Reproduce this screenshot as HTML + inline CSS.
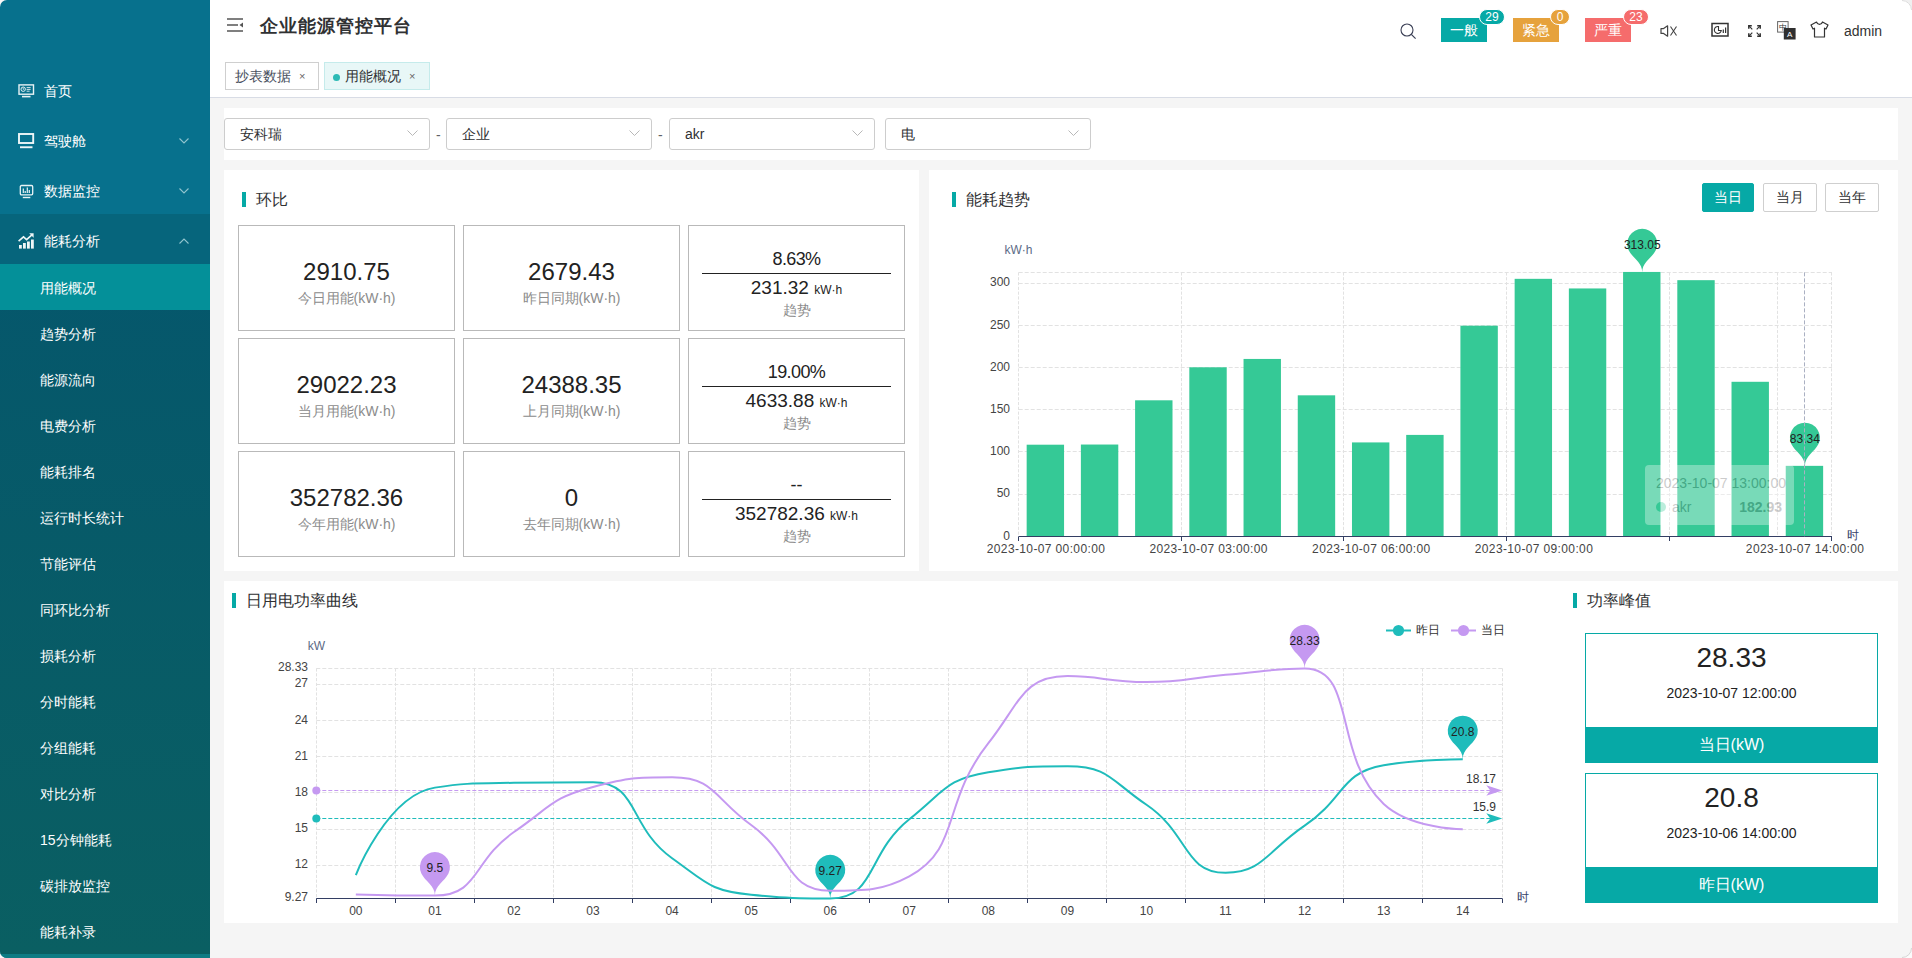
<!DOCTYPE html>
<html lang="zh">
<head>
<meta charset="utf-8">
<title>企业能源管控平台</title>
<style>
*{box-sizing:border-box;margin:0;padding:0}
html,body{width:1912px;height:958px;overflow:hidden}
body{position:relative;background:#f5f5f5;font-family:"Liberation Sans",sans-serif;color:#303133}
.a{position:absolute}
.sb{left:0;top:0;width:210px;height:958px;background:#07718d;border-top-left-radius:7px;border-bottom-left-radius:7px;overflow:hidden}
.mi{position:absolute;left:0;width:210px;height:50px;color:#fff;font-size:14px;line-height:50px}
.mi span{position:absolute;left:44px;top:2px}
.mi svg.ic{position:absolute;left:18px;top:19px}
.mi svg.ch{position:absolute;left:179px;top:24px}
.sub{position:absolute;left:0;top:264px;width:210px;height:690px;background:linear-gradient(#05576c,#0a5f62)}
.si{position:absolute;left:0;width:210px;height:46px;line-height:48px;color:#fff;font-size:14px;padding-left:40px}
.si.on{background:#049099}
.hd{left:210px;top:0;width:1702px;height:98px;background:#fff;border-bottom:1px solid #d8dce5}
.title{position:absolute;left:50px;top:13px;font-size:18px;font-weight:bold;color:#303133;line-height:26px;letter-spacing:1px}
.tag{position:absolute;top:62px;height:28px;border:1px solid #cfcfcf;background:#fff;font-size:14px;line-height:26px;color:#495060;padding-left:9px}
.tag.on{background:#e8f7f7;border-color:#c5ebeb;color:#303133}
.tag .x{position:absolute;font-size:11px;color:#666;top:0}
.badge{position:absolute;top:18px;height:24px;width:46px;color:#fff;font-size:14px;line-height:24px;text-align:center}
.bn{position:absolute;top:9px;height:16px;border-radius:8px;border:1px solid #fff;color:#fff;font-size:12px;line-height:14px;text-align:center}
.panel{background:#fff}
.sel{position:absolute;top:10px;width:206px;height:32px;border:1px solid #cdcdcd;border-radius:3px;font-size:14px;line-height:30px;padding-left:15px;color:#303133}
.sel svg{position:absolute;right:10px;top:11px}
.dash{position:absolute;top:11px;line-height:32px;font-size:14px;color:#606266}
.ptitle{position:absolute;font-size:16px;color:#303133;line-height:20px}
.bar4{position:absolute;width:4px;height:15px;background:#06a9a6}
.card{position:absolute;width:217px;height:106px;border:1px solid #b9b9b9;text-align:center}
.card .v{position:absolute;left:0;right:0;font-size:24px;color:#222;line-height:28px}
.card .l{position:absolute;left:0;right:0;font-size:14px;color:#8c8c8c;line-height:18px}
.btn{position:absolute;top:13px;height:29px;width:53px;border:1px solid #cfcfcf;border-radius:2px;font-size:14px;line-height:27px;text-align:center;color:#303133;background:#fff}
.btn.on{background:#06a9a6;border-color:#06a9a6;color:#fff}
svg text{font-family:"Liberation Sans",sans-serif}
.al{font-size:12px;fill:#444}
.an{font-size:12px;fill:#5b6a86}
.pl{font-size:12px;fill:#222}
.ml{font-size:12px;fill:#333}
.lg{font-size:12px;fill:#333}
.tt{font-size:14px;fill:#c9c9c9}
.pk{position:absolute;left:1585px;width:293px;height:130px;border:1px solid #06a9a6}
.pk .v{position:absolute;left:0;right:0;top:6px;text-align:center;font-size:28px;line-height:36px;color:#222}
.pk .d{position:absolute;left:0;right:0;top:50px;text-align:center;font-size:14px;line-height:18px;color:#222}
.pk .f{position:absolute;left:-1px;right:-1px;bottom:-1px;height:36px;background:#06a9a6;color:#fff;text-align:center;font-size:16px;line-height:36px}
</style>
</head>
<body>

<div class="a" style="left:0;top:0;width:20px;height:958px;background:#fbf8f8"></div>
<!-- SIDEBAR -->
<div class="a sb">
  <div class="mi" style="top:64px">
    <svg class="ic" width="17" height="16" viewBox="0 0 17 16"><rect x="1" y="1.9" width="14.5" height="9.3" fill="none" stroke="#e8f3f5" stroke-width="1.4"/><circle cx="5.2" cy="6.2" r="2.2" fill="none" stroke="#e8f3f5" stroke-width="1"/><path d="M5.2 4.8v1.5h1" stroke="#e8f3f5" stroke-width="0.8" fill="none"/><path d="M8.6 4.6h4M8.6 6.4h4M8.6 8.2h3" stroke="#e8f3f5" stroke-width="0.9"/><rect x="4" y="12.8" width="8.5" height="1.6" fill="#e8f3f5"/></svg>
    <span>首页</span>
  </div>
  <div class="mi" style="top:114px">
    <svg class="ic" width="17" height="16" viewBox="0 0 17 16"><rect x="1" y="1" width="14.2" height="9" fill="none" stroke="#eef6f7" stroke-width="1.9"/><rect x="2" y="13.3" width="12.5" height="1.9" fill="#eef6f7"/></svg>
    <span>驾驶舱</span>
    <svg class="ch" width="10" height="6" viewBox="0 0 10 6"><path d="M0.5 0.5L5 5L9.5 0.5" fill="none" stroke="#8fc3cd" stroke-width="1.1"/></svg>
  </div>
  <div class="mi" style="top:164px">
    <svg class="ic" width="17" height="16" viewBox="0 0 17 16"><rect x="2.3" y="2.5" width="12.4" height="9.3" rx="1.2" fill="none" stroke="#e8f3f5" stroke-width="1.3"/><path d="M5.3 10V5.5M7.2 10V8M9.3 10V4.5M11.3 10V7" stroke="#e8f3f5" stroke-width="1.2"/><rect x="4.8" y="13.8" width="7.5" height="1.4" fill="#e8f3f5"/></svg>
    <span>数据监控</span>
    <svg class="ch" width="10" height="6" viewBox="0 0 10 6"><path d="M0.5 0.5L5 5L9.5 0.5" fill="none" stroke="#8fc3cd" stroke-width="1.1"/></svg>
  </div>
  <div class="mi" style="top:214px;background:#06657c">
    <svg class="ic" width="17" height="17" viewBox="0 0 17 17"><path d="M0.6 8.2L5.5 3.8L8.6 6.6L14.2 1.6" fill="none" stroke="#eef6f7" stroke-width="1.6"/><path d="M11.2 0.3h4.4v4.4z" fill="#eef6f7"/><rect x="1" y="12" width="2.8" height="3.6" fill="#eef6f7"/><rect x="5" y="10" width="2.8" height="5.6" fill="#eef6f7"/><rect x="9" y="8.5" width="2.8" height="7.1" fill="#eef6f7"/><rect x="13" y="6.5" width="2.8" height="9.1" fill="#eef6f7"/></svg>
    <span>能耗分析</span>
    <svg class="ch" width="10" height="6" viewBox="0 0 10 6" style="top:24px"><path d="M0.5 5.5L5 1L9.5 5.5" fill="none" stroke="#8fc3cd" stroke-width="1.1"/></svg>
  </div>
  <div class="sub">
    <div class="si on" style="top:0">用能概况</div>
    <div class="si" style="top:46px">趋势分析</div>
    <div class="si" style="top:92px">能源流向</div>
    <div class="si" style="top:138px">电费分析</div>
    <div class="si" style="top:184px">能耗排名</div>
    <div class="si" style="top:230px">运行时长统计</div>
    <div class="si" style="top:276px">节能评估</div>
    <div class="si" style="top:322px">同环比分析</div>
    <div class="si" style="top:368px">损耗分析</div>
    <div class="si" style="top:414px">分时能耗</div>
    <div class="si" style="top:460px">分组能耗</div>
    <div class="si" style="top:506px">对比分析</div>
    <div class="si" style="top:552px">15分钟能耗</div>
    <div class="si" style="top:598px">碳排放监控</div>
    <div class="si" style="top:644px">能耗补录</div>
  </div>
  <div class="a" style="left:0;top:954px;width:210px;height:4px;background:#0e7c84"></div>
</div>

<!-- HEADER -->
<div class="a hd">
  <svg class="a" style="left:17px;top:18px" width="17" height="15" viewBox="0 0 17 15"><path d="M0 1h16M0 7h11M0 13h16" stroke="#555" stroke-width="1.6"/><path d="M16 4.5L12.5 7L16 9.5z" fill="#555"/></svg>
  <div class="title">企业能源管控平台</div>
  <div class="tag" style="left:15px;width:94px">抄表数据<span class="x" style="left:73px">×</span></div>
  <div class="tag on" style="left:114px;width:106px"><span style="position:absolute;left:8px;top:11px;width:7px;height:7px;border-radius:50%;background:#2cbab5"></span><span style="position:absolute;left:20px">用能概况</span><span class="x" style="left:84px">×</span></div>

  <svg class="a" style="left:1190px;top:23px" width="17" height="17" viewBox="0 0 17 17"><circle cx="7" cy="7" r="6" fill="none" stroke="#3a3f55" stroke-width="1.1"/><path d="M11.3 11.3L15.6 15.6" stroke="#3a3f55" stroke-width="1.2"/></svg>

  <div class="badge" style="left:1231px;background:#06a9a6">一般</div>
  <div class="bn" style="left:1269px;width:26px;background:#06a9a6">29</div>
  <div class="badge" style="left:1303px;background:#e6a23c">紧急</div>
  <div class="bn" style="left:1340px;width:20px;background:#e6a23c">0</div>
  <div class="badge" style="left:1375px;background:#f56c6c">严重</div>
  <div class="bn" style="left:1413px;width:26px;background:#f56c6c">23</div>

  <svg class="a" style="left:1450px;top:25px" width="18" height="12" viewBox="0 0 18 12"><path d="M1 3.6h2.6L7.6 0.8v10.4L3.6 8.4H1z" fill="none" stroke="#444" stroke-width="1.2" stroke-linejoin="round"/><path d="M10.5 1.5L16.5 10.5M16.5 1.5L10.5 10.5" stroke="#444" stroke-width="1.1"/></svg>
  <svg class="a" style="left:1501px;top:22px" width="19" height="16" viewBox="0 0 19 16"><rect x="1" y="1.5" width="16" height="12.5" fill="none" stroke="#333" stroke-width="1.5"/><path d="M7.5 4.5A3.5 3.5 0 1 0 10.3 8.5H7.5z" fill="none" stroke="#333" stroke-width="1.1"/><path d="M12.3 11V7.5M14.6 11V5.5" stroke="#333" stroke-width="1.2"/></svg>
  <svg class="a" style="left:1538px;top:25px" width="13" height="12" viewBox="0 0 13 12"><path d="M0.8 3.8V0.8h3M12.2 3.8V0.8h-3M0.8 8.2v3h3M12.2 8.2v3h-3" fill="none" stroke="#333" stroke-width="1.5"/><path d="M1.2 1.2L4.3 4.3M11.8 1.2L8.7 4.3M1.2 10.8L4.3 7.7M11.8 10.8L8.7 7.7" stroke="#333" stroke-width="1.2"/></svg>
  <svg class="a" style="left:1567px;top:21px" width="20" height="19" viewBox="0 0 20 19"><rect x="0.6" y="0.6" width="10.5" height="10.5" fill="#fff" stroke="#666" stroke-width="1"/><text x="5.9" y="8.6" font-size="7.5" text-anchor="middle" fill="#333">中</text><rect x="6.8" y="7" width="11.8" height="11.5" fill="#2f2f2f"/><text x="12.7" y="16.3" font-size="8" text-anchor="middle" fill="#fff">A</text></svg>
  <svg class="a" style="left:1600px;top:21px" width="19" height="17" viewBox="0 0 19 17"><path d="M6.5 1L1 4L3 8L4.5 7.2V16H14.5V7.2L16 8L18 4L12.5 1C12 2.5 11 3.3 9.5 3.3S7 2.5 6.5 1z" fill="none" stroke="#333" stroke-width="1.2" stroke-linejoin="round"/></svg>
  <div class="a" style="left:1634px;top:22px;font-size:14px;line-height:18px;color:#333">admin</div>
</div>

<!-- FILTER PANEL -->
<div class="a panel" style="left:224px;top:108px;width:1674px;height:52px">
  <div class="sel" style="left:0">安科瑞<svg width="12" height="7" viewBox="0 0 12 7"><path d="M0.5 0.5L5.5 5.5L10.5 0.5" fill="none" stroke="#b8b8b8" stroke-width="1"/></svg></div>
  <div class="dash" style="left:212px">-</div>
  <div class="sel" style="left:222px">企业<svg width="12" height="7" viewBox="0 0 12 7"><path d="M0.5 0.5L5.5 5.5L10.5 0.5" fill="none" stroke="#b8b8b8" stroke-width="1"/></svg></div>
  <div class="dash" style="left:434px">-</div>
  <div class="sel" style="left:445px">akr<svg width="12" height="7" viewBox="0 0 12 7"><path d="M0.5 0.5L5.5 5.5L10.5 0.5" fill="none" stroke="#b8b8b8" stroke-width="1"/></svg></div>
  <div class="sel" style="left:661px">电<svg width="12" height="7" viewBox="0 0 12 7"><path d="M0.5 0.5L5.5 5.5L10.5 0.5" fill="none" stroke="#b8b8b8" stroke-width="1"/></svg></div>
</div>

<!-- PANEL 环比 -->
<div class="a panel" style="left:224px;top:170px;width:695px;height:401px">
  <div class="bar4" style="left:18px;top:22px"></div>
  <div class="ptitle" style="left:32px;top:20px">环比</div>

  <div class="card" style="left:14px;top:55px"><div class="v" style="top:32px">2910.75</div><div class="l" style="top:63px">今日用能(kW·h)</div></div>
  <div class="card" style="left:239px;top:55px"><div class="v" style="top:32px">2679.43</div><div class="l" style="top:63px">昨日同期(kW·h)</div></div>
  <div class="card" style="left:464px;top:55px">
    <div class="v" style="top:22px;font-size:18px;line-height:22px;letter-spacing:-0.6px">8.63%</div>
    <div class="a" style="left:13px;right:13px;top:47px;height:1px;background:#222"></div>
    <div class="v" style="top:50px;font-size:19px;line-height:24px">231.32 <span style="font-size:12px">kW·h</span></div>
    <div class="l" style="top:75px">趋势</div>
  </div>

  <div class="card" style="left:14px;top:168px"><div class="v" style="top:32px">29022.23</div><div class="l" style="top:63px">当月用能(kW·h)</div></div>
  <div class="card" style="left:239px;top:168px"><div class="v" style="top:32px">24388.35</div><div class="l" style="top:63px">上月同期(kW·h)</div></div>
  <div class="card" style="left:464px;top:168px">
    <div class="v" style="top:22px;font-size:18px;line-height:22px;letter-spacing:-0.6px">19.00%</div>
    <div class="a" style="left:13px;right:13px;top:47px;height:1px;background:#222"></div>
    <div class="v" style="top:50px;font-size:19px;line-height:24px">4633.88 <span style="font-size:12px">kW·h</span></div>
    <div class="l" style="top:75px">趋势</div>
  </div>

  <div class="card" style="left:14px;top:281px"><div class="v" style="top:32px">352782.36</div><div class="l" style="top:63px">今年用能(kW·h)</div></div>
  <div class="card" style="left:239px;top:281px"><div class="v" style="top:32px">0</div><div class="l" style="top:63px">去年同期(kW·h)</div></div>
  <div class="card" style="left:464px;top:281px">
    <div class="v" style="top:22px;font-size:18px;line-height:22px">--</div>
    <div class="a" style="left:13px;right:13px;top:47px;height:1px;background:#222"></div>
    <div class="v" style="top:50px;font-size:19px;line-height:24px">352782.36 <span style="font-size:12px">kW·h</span></div>
    <div class="l" style="top:75px">趋势</div>
  </div>
</div>

<!-- PANEL 能耗趋势 -->
<div class="a panel" style="left:929px;top:170px;width:969px;height:401px">
  <div class="bar4" style="left:23px;top:22px"></div>
  <div class="ptitle" style="left:37px;top:20px">能耗趋势</div>
  <div class="btn on" style="left:773px;width:52px">当日</div>
  <div class="btn" style="left:834px;width:54px">当月</div>
  <div class="btn" style="left:896px;width:54px">当年</div>
</div>

<!-- PANEL bottom -->
<div class="a panel" style="left:224px;top:581px;width:1674px;height:342px">
  <div class="bar4" style="left:8px;top:12px"></div>
  <div class="ptitle" style="left:22px;top:10px">日用电功率曲线</div>
  <div class="bar4" style="left:1349px;top:12px"></div>
  <div class="ptitle" style="left:1363px;top:10px">功率峰值</div>
</div>
<div class="pk" style="top:633px"><div class="v">28.33</div><div class="d">2023-10-07 12:00:00</div><div class="f">当日(kW)</div></div>
<div class="pk" style="top:773px"><div class="v">20.8</div><div class="d">2023-10-06 14:00:00</div><div class="f">昨日(kW)</div></div>

<svg class="a" style="left:0;top:0" width="1912" height="958" viewBox="0 0 1912 958">
<line x1="1018.7" y1="494.5" x2="1832" y2="494.5" stroke="#e2e2e2" stroke-dasharray="4 2"/>
<line x1="1018.7" y1="451.5" x2="1832" y2="451.5" stroke="#e2e2e2" stroke-dasharray="4 2"/>
<line x1="1018.7" y1="409.5" x2="1832" y2="409.5" stroke="#e2e2e2" stroke-dasharray="4 2"/>
<line x1="1018.7" y1="367.5" x2="1832" y2="367.5" stroke="#e2e2e2" stroke-dasharray="4 2"/>
<line x1="1018.7" y1="325.5" x2="1832" y2="325.5" stroke="#e2e2e2" stroke-dasharray="4 2"/>
<line x1="1018.7" y1="283.5" x2="1832" y2="283.5" stroke="#e2e2e2" stroke-dasharray="4 2"/>
<line x1="1018.7" y1="272.5" x2="1832" y2="272.5" stroke="#e2e2e2" stroke-dasharray="4 2"/>
<line x1="1018.5" y1="272.35" x2="1018.5" y2="536.6" stroke="#e2e2e2" stroke-dasharray="3.2 1.6"/>
<line x1="1181.5" y1="272.35" x2="1181.5" y2="536.6" stroke="#e2e2e2" stroke-dasharray="3.2 1.6"/>
<line x1="1343.5" y1="272.35" x2="1343.5" y2="536.6" stroke="#e2e2e2" stroke-dasharray="3.2 1.6"/>
<line x1="1506.5" y1="272.35" x2="1506.5" y2="536.6" stroke="#e2e2e2" stroke-dasharray="3.2 1.6"/>
<line x1="1669.5" y1="272.35" x2="1669.5" y2="536.6" stroke="#e2e2e2" stroke-dasharray="3.2 1.6"/>
<line x1="1777.5" y1="272.35" x2="1777.5" y2="536.6" stroke="#e2e2e2" stroke-dasharray="3.2 1.6"/>
<line x1="1831.5" y1="272.35" x2="1831.5" y2="536.6" stroke="#e2e2e2" stroke-dasharray="3.2 1.6"/>
<rect x="1026.66" y="444.7" width="37.4" height="91.9" fill="#35c996"/>
<rect x="1080.88" y="444.53" width="37.4" height="92.07" fill="#35c996"/>
<rect x="1135.1" y="400.3" width="37.4" height="136.3" fill="#35c996"/>
<rect x="1189.32" y="367.29" width="37.4" height="169.31" fill="#35c996"/>
<rect x="1243.54" y="358.94" width="37.4" height="177.66" fill="#35c996"/>
<rect x="1297.76" y="395.32" width="37.4" height="141.28" fill="#35c996"/>
<rect x="1351.98" y="442.42" width="37.4" height="94.18" fill="#35c996"/>
<rect x="1406.2" y="434.91" width="37.4" height="101.69" fill="#35c996"/>
<rect x="1460.42" y="325.68" width="37.4" height="210.92" fill="#35c996"/>
<rect x="1514.64" y="278.83" width="37.4" height="257.77" fill="#35c996"/>
<rect x="1568.86" y="288.45" width="37.4" height="248.15" fill="#35c996"/>
<rect x="1623.08" y="271.95" width="37.4" height="264.65" fill="#35c996"/>
<rect x="1677.3" y="280.18" width="37.4" height="256.42" fill="#35c996"/>
<rect x="1731.52" y="381.79" width="37.4" height="154.81" fill="#35c996"/>
<rect x="1785.74" y="465.85" width="37.4" height="70.75" fill="#35c996"/>
<line x1="1018.7" y1="536.5" x2="1832" y2="536.5" stroke="#333e63"/>
<line x1="1018.5" y1="536.5" x2="1018.5" y2="541" stroke="#333e63"/>
<line x1="1181.5" y1="536.5" x2="1181.5" y2="541" stroke="#333e63"/>
<line x1="1343.5" y1="536.5" x2="1343.5" y2="541" stroke="#333e63"/>
<line x1="1506.5" y1="536.5" x2="1506.5" y2="541" stroke="#333e63"/>
<line x1="1669.5" y1="536.5" x2="1669.5" y2="541" stroke="#333e63"/>
<line x1="1831.5" y1="536.5" x2="1831.5" y2="541" stroke="#333e63"/>
<text x="1010" y="535.6" text-anchor="end" dominant-baseline="central" class="al">0</text>
<text x="1010" y="493.39" text-anchor="end" dominant-baseline="central" class="al">50</text>
<text x="1010" y="451.19" text-anchor="end" dominant-baseline="central" class="al">100</text>
<text x="1010" y="408.98" text-anchor="end" dominant-baseline="central" class="al">150</text>
<text x="1010" y="366.78" text-anchor="end" dominant-baseline="central" class="al">200</text>
<text x="1010" y="324.57" text-anchor="end" dominant-baseline="central" class="al">250</text>
<text x="1010" y="282.37" text-anchor="end" dominant-baseline="central" class="al">300</text>
<text x="1046.01" y="553" text-anchor="middle" class="al" letter-spacing="0.37">2023-10-07 00:00:00</text>
<text x="1208.67" y="553" text-anchor="middle" class="al" letter-spacing="0.37">2023-10-07 03:00:00</text>
<text x="1371.33" y="553" text-anchor="middle" class="al" letter-spacing="0.37">2023-10-07 06:00:00</text>
<text x="1533.99" y="553" text-anchor="middle" class="al" letter-spacing="0.37">2023-10-07 09:00:00</text>
<text x="1805.09" y="553" text-anchor="middle" class="al" letter-spacing="0.37">2023-10-07 14:00:00</text>
<text x="1018.5" y="254" text-anchor="middle" class="an">kW·h</text>
<text x="1847" y="539" class="an" style="fill:#37436a">时</text>
<path d="M1628.68 250.21 A15 15 0 1 1 1655.78 250.21 C1651.93 258.34 1642.23 261.85 1642.23 272.35 C1642.23 261.85 1632.53 258.34 1628.68 250.21Z" fill="#35c996"/>
<text x="1642.23" y="244.78" text-anchor="middle" dominant-baseline="central" class="pl">313.05</text>
<path d="M1791.34 444.11 A15 15 0 1 1 1818.44 444.11 C1814.59 452.24 1804.89 455.75 1804.89 466.25 C1804.89 455.75 1795.19 452.24 1791.34 444.11Z" fill="#35c996"/>
<text x="1804.89" y="438.68" text-anchor="middle" dominant-baseline="central" class="pl">83.34</text>
<line x1="1804.5" y1="272.35" x2="1804.5" y2="536.6" stroke="#aab0c2" stroke-dasharray="4 2"/>
<g opacity="0.33">
<rect x="1645" y="465" width="149" height="60" rx="4" fill="#ffffff"/>
<text x="1656" y="488" class="tt" style="fill:#666">2023-10-07 13:00:00</text>
<circle cx="1661" cy="507" r="5" fill="#35c996"/>
<text x="1672" y="512" class="tt" style="fill:#666">akr</text>
<text x="1782" y="512" text-anchor="end" class="tt" font-weight="bold" style="fill:#666">182.93</text>
</g>
<line x1="316.3" y1="865.5" x2="1502.3" y2="865.5" stroke="#e2e2e2" stroke-dasharray="4 2"/>
<line x1="316.3" y1="829.5" x2="1502.3" y2="829.5" stroke="#e2e2e2" stroke-dasharray="4 2"/>
<line x1="316.3" y1="792.5" x2="1502.3" y2="792.5" stroke="#e2e2e2" stroke-dasharray="4 2"/>
<line x1="316.3" y1="756.5" x2="1502.3" y2="756.5" stroke="#e2e2e2" stroke-dasharray="4 2"/>
<line x1="316.3" y1="720.5" x2="1502.3" y2="720.5" stroke="#e2e2e2" stroke-dasharray="4 2"/>
<line x1="316.3" y1="684.5" x2="1502.3" y2="684.5" stroke="#e2e2e2" stroke-dasharray="4 2"/>
<line x1="316.3" y1="668.5" x2="1502.3" y2="668.5" stroke="#e2e2e2" stroke-dasharray="4 2"/>
<line x1="316.5" y1="668.4" x2="316.5" y2="898.4" stroke="#e2e2e2" stroke-dasharray="3.2 1.6"/>
<line x1="395.5" y1="668.4" x2="395.5" y2="898.4" stroke="#e2e2e2" stroke-dasharray="3.2 1.6"/>
<line x1="474.5" y1="668.4" x2="474.5" y2="898.4" stroke="#e2e2e2" stroke-dasharray="3.2 1.6"/>
<line x1="553.5" y1="668.4" x2="553.5" y2="898.4" stroke="#e2e2e2" stroke-dasharray="3.2 1.6"/>
<line x1="632.5" y1="668.4" x2="632.5" y2="898.4" stroke="#e2e2e2" stroke-dasharray="3.2 1.6"/>
<line x1="711.5" y1="668.4" x2="711.5" y2="898.4" stroke="#e2e2e2" stroke-dasharray="3.2 1.6"/>
<line x1="790.5" y1="668.4" x2="790.5" y2="898.4" stroke="#e2e2e2" stroke-dasharray="3.2 1.6"/>
<line x1="869.5" y1="668.4" x2="869.5" y2="898.4" stroke="#e2e2e2" stroke-dasharray="3.2 1.6"/>
<line x1="948.5" y1="668.4" x2="948.5" y2="898.4" stroke="#e2e2e2" stroke-dasharray="3.2 1.6"/>
<line x1="1027.5" y1="668.4" x2="1027.5" y2="898.4" stroke="#e2e2e2" stroke-dasharray="3.2 1.6"/>
<line x1="1106.5" y1="668.4" x2="1106.5" y2="898.4" stroke="#e2e2e2" stroke-dasharray="3.2 1.6"/>
<line x1="1185.5" y1="668.4" x2="1185.5" y2="898.4" stroke="#e2e2e2" stroke-dasharray="3.2 1.6"/>
<line x1="1264.5" y1="668.4" x2="1264.5" y2="898.4" stroke="#e2e2e2" stroke-dasharray="3.2 1.6"/>
<line x1="1343.5" y1="668.4" x2="1343.5" y2="898.4" stroke="#e2e2e2" stroke-dasharray="3.2 1.6"/>
<line x1="1422.5" y1="668.4" x2="1422.5" y2="898.4" stroke="#e2e2e2" stroke-dasharray="3.2 1.6"/>
<line x1="1502.5" y1="668.4" x2="1502.5" y2="898.4" stroke="#e2e2e2" stroke-dasharray="3.2 1.6"/>
<line x1="316.3" y1="898.5" x2="1502.3" y2="898.5" stroke="#333e63"/>
<line x1="316.5" y1="898.5" x2="316.5" y2="903" stroke="#333e63"/>
<line x1="395.5" y1="898.5" x2="395.5" y2="903" stroke="#333e63"/>
<line x1="474.5" y1="898.5" x2="474.5" y2="903" stroke="#333e63"/>
<line x1="553.5" y1="898.5" x2="553.5" y2="903" stroke="#333e63"/>
<line x1="632.5" y1="898.5" x2="632.5" y2="903" stroke="#333e63"/>
<line x1="711.5" y1="898.5" x2="711.5" y2="903" stroke="#333e63"/>
<line x1="790.5" y1="898.5" x2="790.5" y2="903" stroke="#333e63"/>
<line x1="869.5" y1="898.5" x2="869.5" y2="903" stroke="#333e63"/>
<line x1="948.5" y1="898.5" x2="948.5" y2="903" stroke="#333e63"/>
<line x1="1027.5" y1="898.5" x2="1027.5" y2="903" stroke="#333e63"/>
<line x1="1106.5" y1="898.5" x2="1106.5" y2="903" stroke="#333e63"/>
<line x1="1185.5" y1="898.5" x2="1185.5" y2="903" stroke="#333e63"/>
<line x1="1264.5" y1="898.5" x2="1264.5" y2="903" stroke="#333e63"/>
<line x1="1343.5" y1="898.5" x2="1343.5" y2="903" stroke="#333e63"/>
<line x1="1422.5" y1="898.5" x2="1422.5" y2="903" stroke="#333e63"/>
<line x1="1502.5" y1="898.5" x2="1502.5" y2="903" stroke="#333e63"/>
<text x="308" y="897.4" text-anchor="end" dominant-baseline="central" class="al">9.27</text>
<text x="308" y="864.46" text-anchor="end" dominant-baseline="central" class="al">12</text>
<text x="308" y="828.26" text-anchor="end" dominant-baseline="central" class="al">15</text>
<text x="308" y="792.05" text-anchor="end" dominant-baseline="central" class="al">18</text>
<text x="308" y="755.85" text-anchor="end" dominant-baseline="central" class="al">21</text>
<text x="308" y="719.65" text-anchor="end" dominant-baseline="central" class="al">24</text>
<text x="308" y="683.45" text-anchor="end" dominant-baseline="central" class="al">27</text>
<text x="308" y="667.4" text-anchor="end" dominant-baseline="central" class="al">28.33</text>
<text x="355.83" y="915" text-anchor="middle" class="al">00</text>
<text x="434.9" y="915" text-anchor="middle" class="al">01</text>
<text x="513.97" y="915" text-anchor="middle" class="al">02</text>
<text x="593.03" y="915" text-anchor="middle" class="al">03</text>
<text x="672.1" y="915" text-anchor="middle" class="al">04</text>
<text x="751.17" y="915" text-anchor="middle" class="al">05</text>
<text x="830.23" y="915" text-anchor="middle" class="al">06</text>
<text x="909.3" y="915" text-anchor="middle" class="al">07</text>
<text x="988.37" y="915" text-anchor="middle" class="al">08</text>
<text x="1067.43" y="915" text-anchor="middle" class="al">09</text>
<text x="1146.5" y="915" text-anchor="middle" class="al">10</text>
<text x="1225.57" y="915" text-anchor="middle" class="al">11</text>
<text x="1304.63" y="915" text-anchor="middle" class="al">12</text>
<text x="1383.7" y="915" text-anchor="middle" class="al">13</text>
<text x="1462.77" y="915" text-anchor="middle" class="al">14</text>
<text x="316.5" y="650" text-anchor="middle" class="an">kW</text>
<text x="1516.5" y="901" class="an" style="fill:#37436a">时</text>
<line x1="316.3" y1="790.5" x2="1490.3" y2="790.5" stroke="#c599f1" stroke-dasharray="4 2" stroke-width="1"/>
<circle cx="316.3" cy="790.5" r="4" fill="#c599f1"/>
<path d="M1502.3 790.5 L1486.3 785.17 L1490.3 790.5 L1486.3 795.83Z" fill="#c599f1"/>
<text x="1496" y="782.5" text-anchor="end" class="ml">18.17</text>
<line x1="316.3" y1="818.5" x2="1490.3" y2="818.5" stroke="#1fbcbb" stroke-dasharray="4 2" stroke-width="1"/>
<circle cx="316.3" cy="818.5" r="4" fill="#1fbcbb"/>
<path d="M1502.3 818.5 L1486.3 813.17 L1490.3 818.5 L1486.3 823.83Z" fill="#1fbcbb"/>
<text x="1496" y="810.5" text-anchor="end" class="ml">15.9</text>
<path d="M355.83 875.11C355.83 875.11 387.6 794.81 434.9 787.62C466.67 782.8 474.4 783.4 513.97 782.8C553.46 782.19 559.91 782.19 593.03 782.19C638.98 782.19 628.03 826.84 672.1 858.22C707.1 883.13 709.74 890.8 751.17 894.78C788.81 898.4 797.47 898.4 830.23 898.4C876.54 898.4 865.91 853.87 909.3 819.24C944.98 790.76 945.9 779.04 988.37 772.18C1024.96 766.26 1029.95 766.26 1067.43 766.26C1109.01 766.26 1110.34 780.39 1146.5 804.76C1189.4 833.67 1183.57 872.82 1225.57 872.82C1262.63 872.82 1266.62 851.48 1304.63 825.64C1345.69 797.72 1339.71 772.87 1383.7 765.3C1418.77 759.27 1462.77 759.27 1462.77 759.27" fill="none" stroke="#1fbcbb" stroke-width="2" stroke-linejoin="bevel"/>
<path d="M816.68 876.26 A15 15 0 1 1 843.79 876.26 C839.93 884.39 830.23 887.9 830.23 898.4 C830.23 887.9 820.54 884.39 816.68 876.26Z" fill="#1fbcbb"/>
<text x="830.23" y="870.83" text-anchor="middle" dominant-baseline="central" class="pl">9.27</text>
<path d="M1449.21 737.12 A15 15 0 1 1 1476.32 737.12 C1472.46 745.25 1462.77 748.77 1462.77 759.27 C1462.77 748.77 1453.07 745.25 1449.21 737.12Z" fill="#1fbcbb"/>
<text x="1462.77" y="731.69" text-anchor="middle" dominant-baseline="central" class="pl">20.8</text>
<path d="M355.83 894.42C355.83 894.42 400.27 895.62 434.9 895.62C479.34 895.62 472.28 860.66 513.97 832.03C551.35 806.36 550.88 798.05 593.03 787.02C629.94 777.37 635.48 777.37 672.1 777.37C714.55 777.37 713.76 798.2 751.17 825.03C792.83 854.92 785.85 890.8 830.23 890.8C864.92 890.8 882.28 890.8 909.3 876.32C961.34 848.43 941.02 803.16 988.37 743.22C1020.08 703.06 1022.63 676.12 1067.43 676.12C1101.69 676.12 1106.99 682.04 1146.5 682.04C1186.06 682.04 1186.02 678.21 1225.57 674.8C1265.08 671.39 1278.08 668.4 1304.63 668.4C1357.15 668.4 1332 756.03 1383.7 803.91C1411.06 829.26 1462.77 829.26 1462.77 829.26" fill="none" stroke="#c599f1" stroke-width="2" stroke-linejoin="bevel"/>
<path d="M421.35 873.48 A15 15 0 1 1 448.45 873.48 C444.6 881.61 434.9 885.12 434.9 895.62 C434.9 885.12 425.2 881.61 421.35 873.48Z" fill="#c599f1"/>
<text x="434.9" y="868.05" text-anchor="middle" dominant-baseline="central" class="pl">9.5</text>
<path d="M1291.08 646.26 A15 15 0 1 1 1318.19 646.26 C1314.33 654.39 1304.63 657.9 1304.63 668.4 C1304.63 657.9 1294.94 654.39 1291.08 646.26Z" fill="#c599f1"/>
<text x="1304.63" y="640.83" text-anchor="middle" dominant-baseline="central" class="pl">28.33</text>
<line x1="1386" y1="630.5" x2="1411" y2="630.5" stroke="#1fbcbb" stroke-width="2"/>
<circle cx="1398.5" cy="630.5" r="5.6" fill="#1fbcbb"/>
<text x="1416" y="634" class="lg">昨日</text>
<line x1="1451" y1="630.5" x2="1476" y2="630.5" stroke="#c599f1" stroke-width="2"/>
<circle cx="1463.5" cy="630.5" r="5.6" fill="#c599f1"/>
<text x="1481" y="634" class="lg">当日</text>
</svg>

<svg class="a" style="left:1902px;top:0" width="10" height="10" viewBox="0 0 10 10"><path d="M0 0H10V10A10 10 0 0 0 0 0z" fill="#f0f0f0"/><path d="M0 0.5A9.5 9.5 0 0 1 9.5 10" fill="none" stroke="#dcdcdc" stroke-width="1"/></svg>
<svg class="a" style="left:1902px;top:948px" width="10" height="10" viewBox="0 0 10 10"><path d="M10 0V10H0A10 10 0 0 0 10 0z" fill="#fbfbfb"/><path d="M9.5 0A9.5 9.5 0 0 1 0 9.5" fill="none" stroke="#d6d6d6" stroke-width="1"/></svg>
</body>
</html>
